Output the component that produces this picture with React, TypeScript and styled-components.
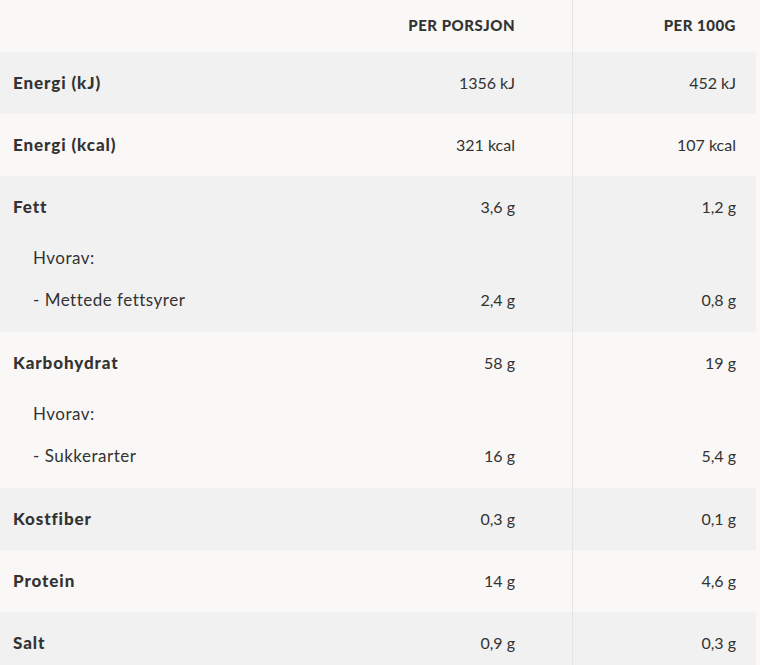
import React from "react";
import styled, { createGlobalStyle } from "styled-components";

const Global = createGlobalStyle`
  html, body { margin: 0; padding: 0; background: #f9f8f6; }
  body { font-family: "Lato", "Open Sans", sans-serif; color: #333; }
`;

const Table = styled.div`
  width: 756px;
  display: flex;
  flex-direction: column;
`;

const Group = styled.div<{ $shade: boolean }>`
  background: ${(p) => (p.$shade ? "#f1f1f1" : "transparent")};
  display: flex;
  flex-direction: column;
`;

const Row = styled.div<{ $h: number }>`
  display: grid;
  grid-template-columns: 1fr 200px 184px;
  height: ${(p) => p.$h}px;
`;

const Label = styled.div<{ $sub?: boolean }>`
  display: flex;
  align-items: center;
  padding-left: ${(p) => (p.$sub ? 33 : 13)}px;
  padding-bottom: 2px;
  font-size: 17px;
  letter-spacing: ${(p) => (p.$sub ? 0.5 : 0.9)}px;
  font-weight: ${(p) => (p.$sub ? 400 : 900)};
  color: #333;
`;

const Value = styled.div<{ $divider?: boolean; $head?: boolean }>`
  display: flex;
  align-items: center;
  justify-content: flex-end;
  padding-bottom: 2px;
  padding-right: ${(p) => (p.$divider ? 20 : 57)}px;
  border-left: ${(p) => (p.$divider ? "1px solid #e4e4e4" : "none")};
  font-size: ${(p) => (p.$head ? 15 : 16)}px;
  letter-spacing: ${(p) => (p.$head ? 0.5 : 0)}px;
  font-weight: ${(p) => (p.$head ? 900 : 400)};
  text-transform: ${(p) => (p.$head ? "uppercase" : "none")};
  color: #333;
`;

type Line = { label: string; a?: string; b?: string; sub?: boolean; h: number };

const groups: Line[][] = [
  [{ label: "Energi (kJ)", a: "1356 kJ", b: "452 kJ", h: 62 }],
  [{ label: "Energi (kcal)", a: "321 kcal", b: "107 kcal", h: 62 }],
  [
    { label: "Fett", a: "3,6 g", b: "1,2 g", h: 62 },
    { label: "Hvorav:", sub: true, h: 40 },
    { label: "- Mettede fettsyrer", a: "2,4 g", b: "0,8 g", sub: true, h: 44 },
    { label: "", h: 10 },
  ],
  [
    { label: "Karbohydrat", a: "58 g", b: "19 g", h: 62 },
    { label: "Hvorav:", sub: true, h: 40 },
    { label: "- Sukkerarter", a: "16 g", b: "5,4 g", sub: true, h: 44 },
    { label: "", h: 10 },
  ],
  [{ label: "Kostfiber", a: "0,3 g", b: "0,1 g", h: 62 }],
  [{ label: "Protein", a: "14 g", b: "4,6 g", h: 62 }],
  [{ label: "Salt", a: "0,9 g", b: "0,3 g", h: 62 }],
];

export default function App() {
  return (
    <>
      <Global />
      <Table>
        <Row $h={52}>
          <Label />
          <Value $head>Per porsjon</Value>
          <Value $head $divider>Per 100g</Value>
        </Row>
        {groups.map((g, gi) => (
          <Group key={gi} $shade={gi % 2 === 0}>
            {g.map((l, li) => (
              <Row key={li} $h={l.h}>
                <Label $sub={l.sub}>{l.label}</Label>
                <Value>{l.a}</Value>
                <Value $divider>{l.b}</Value>
              </Row>
            ))}
          </Group>
        ))}
      </Table>
    </>
  );
}
